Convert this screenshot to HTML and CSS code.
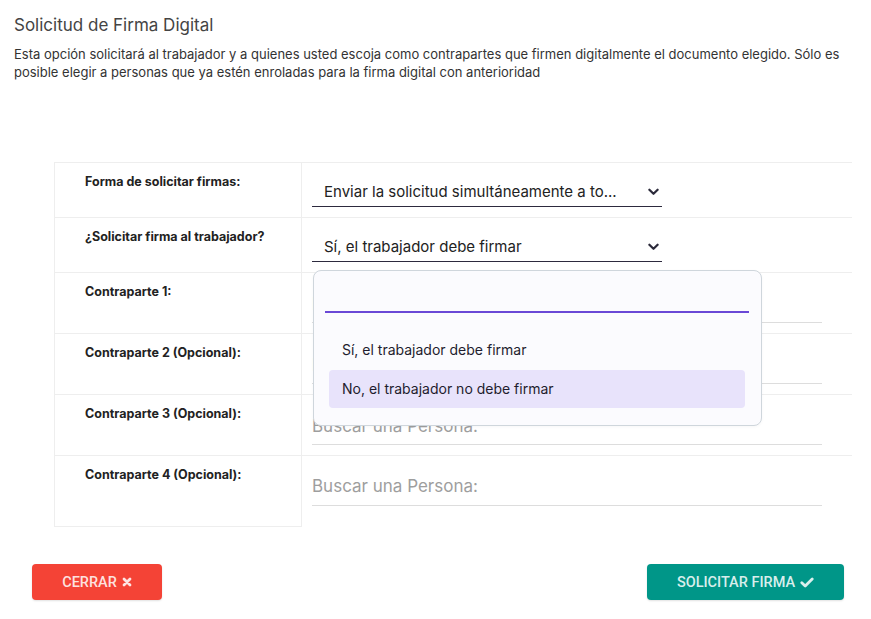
FILE: index.html
```html
<!DOCTYPE html>
<html lang="es">
<head>
<meta charset="utf-8">
<title>Solicitud de Firma Digital</title>
<link rel="stylesheet" href="styles.css">
</head>
<body>
<div class="dialog">
  <header class="dialog-head">
    <h2 class="dialog-title">Solicitud de Firma Digital</h2>
    <p class="dialog-intro">Esta opción solicitará al trabajador y a quienes usted escoja como contrapartes que firmen digitalmente el documento elegido. Sólo es posible elegir a personas que ya estén enroladas para la firma digital con anterioridad</p>
  </header>

  <div class="form-table">
    <div class="row row-select">
      <div class="label">Forma de solicitar firmas:</div>
      <div class="value">
        <div class="select">
          <span class="select-text">Enviar la solicitud simultáneamente a to...</span>
          <svg class="chevron" viewBox="0 0 12 8" width="11" height="8"><path d="M1.5 1.5 L6 6 L10.5 1.5" fill="none" stroke="currentColor" stroke-width="2.4" stroke-linecap="round" stroke-linejoin="round"/></svg>
        </div>
      </div>
    </div>
    <div class="row row-select">
      <div class="label">¿Solicitar firma al trabajador?</div>
      <div class="value has-menu">
        <div class="select">
          <span class="select-text">Sí, el trabajador debe firmar</span>
          <svg class="chevron" viewBox="0 0 12 8" width="11" height="8"><path d="M1.5 1.5 L6 6 L10.5 1.5" fill="none" stroke="currentColor" stroke-width="2.4" stroke-linecap="round" stroke-linejoin="round"/></svg>
        </div>
        <div class="menu">
          <div class="menu-search"></div>
          <ul class="menu-list">
            <li class="menu-item">Sí, el trabajador debe firmar</li>
            <li class="menu-item is-active">No, el trabajador no debe firmar</li>
          </ul>
        </div>
      </div>
    </div>
    <div class="row row-input">
      <div class="label">Contraparte 1:</div>
      <div class="value"><div class="search">Buscar una Persona:</div></div>
    </div>
    <div class="row row-input">
      <div class="label">Contraparte 2 (Opcional):</div>
      <div class="value"><div class="search">Buscar una Persona:</div></div>
    </div>
    <div class="row row-input">
      <div class="label">Contraparte 3 (Opcional):</div>
      <div class="value"><div class="search">Buscar una Persona:</div></div>
    </div>
    <div class="row row-input row-last">
      <div class="label">Contraparte 4 (Opcional):</div>
      <div class="value"><div class="search">Buscar una Persona:</div></div>
    </div>
  </div>

  <footer class="dialog-actions">
    <button class="btn btn-close">CERRAR <svg class="btn-icon" viewBox="0 0 10 10" width="10" height="10"><path d="M2 2 L8 8 M8 2 L2 8" stroke="currentColor" stroke-width="2.8" stroke-linecap="round"/></svg></button>
    <button class="btn btn-submit">SOLICITAR FIRMA <svg class="btn-icon" viewBox="0 0 14 11" width="14" height="11"><path d="M1.8 5.8 L5.2 9 L12.2 2" fill="none" stroke="currentColor" stroke-width="2.8" stroke-linecap="round" stroke-linejoin="round"/></svg></button>
  </footer>
</div>
</body>
</html>
```

FILE: styles.css
```css
* {
  box-sizing: border-box;
}

html, body {
  margin: 0;
  padding: 0;
  background: #ffffff;
}

body {
  font-family: Inter, "Noto Sans", sans-serif;
  color: #333;
}

.dialog {
  width: 871px;
  height: 619px;
  padding: 0;
}

.dialog-head {
  padding: 13px 14px 0 14px;
}

.dialog-title {
  margin: 0;
  font-size: 17px;
  line-height: 24px;
  font-weight: 400;
  color: #444;
}

.dialog-intro {
  margin: 8px 0 0 0;
  width: 840px;
  font-size: 13px;
  line-height: 18px;
  color: #333;
}

/* form grid */
.form-table {
  margin: 81px 19px 0 54px;
}

.row {
  display: grid;
  grid-template-columns: 248px 1fr;
  border-top: 1px solid #eeeeee;
}

.row-select {
  height: 55px;
}

.row-input {
  height: 61px;
}

.row-last {
  height: 71px;
}

.label {
  border-left: 1px solid #eeeeee;
  border-right: 1px solid #eeeeee;
  padding: 10px 0 0 30px;
  font-size: 12.5px;
  line-height: 18px;
  font-weight: 700;
  color: #222;
}

.row-last .label {
  border-bottom: 1px solid #eeeeee;
  height: 71px;
}

.value {
  padding: 13px 0 0 10px;
  position: relative;
}

.select {
  width: 350px;
  height: 31px;
  display: flex;
  align-items: center;
  justify-content: space-between;
  padding: 0 3px 0 12px;
  border-bottom: 1px solid #2d2a3e;
  font-size: 15px;
  color: #222;
}

.chevron {
  color: #2b2a3a;
  margin-top: 2px;
}

.search {
  width: 510px;
  height: 37px;
  margin-top: 0;
  padding-top: 7px;
  border-bottom: 1px solid #dddddd;
  font-size: 17px;
  line-height: 22px;
  color: #9e9e9e;
}

.row-last .search {
  padding-top: 6px;
}

/* open dropdown of the worker select */
.menu {
  position: absolute;
  left: 11px;
  top: 52px;
  width: 449px;
  height: 156px;
  background: #fbfbfe;
  border: 1px solid #cfd6dc;
  border-radius: 8px;
  box-shadow: 0 1px 3px rgba(40, 50, 80, 0.04);
  z-index: 5;
  padding: 0 12px 0 11px;
}

.menu-search {
  height: 42px;
  border-bottom: 2px solid #6a48d6;
}

.menu-list {
  list-style: none;
  margin: 18px 0 0 0;
  padding: 0 4px 0 4px;
}

.menu-item {
  height: 38px;
  line-height: 38px;
  padding-left: 13px;
  border-radius: 4px;
  font-size: 14px;
  color: #1f1d2e;
  margin-bottom: 1px;
}

.menu-item.is-active {
  background: #e8e3fb;
}

/* footer buttons */
.dialog-actions {
  display: flex;
  justify-content: space-between;
  margin-top: 38px;
  padding: 0 27px 0 32px;
}

.btn {
  height: 36px;
  border: 0;
  border-radius: 4px;
  font-family: Roboto, "Liberation Sans", sans-serif;
  font-size: 14.5px;
  font-weight: 500;
  color: rgba(255, 255, 255, 0.86);
  display: inline-flex;
  align-items: center;
  justify-content: center;
  gap: 5px;
  padding: 0;
  box-shadow: 0 1px 2px rgba(0, 0, 0, 0.12);
}

.btn-close {
  width: 130px;
  background: #f44336;
}

.btn-submit {
  width: 197px;
  background: #009688;
}

.btn-icon {
  display: block;
}
```
